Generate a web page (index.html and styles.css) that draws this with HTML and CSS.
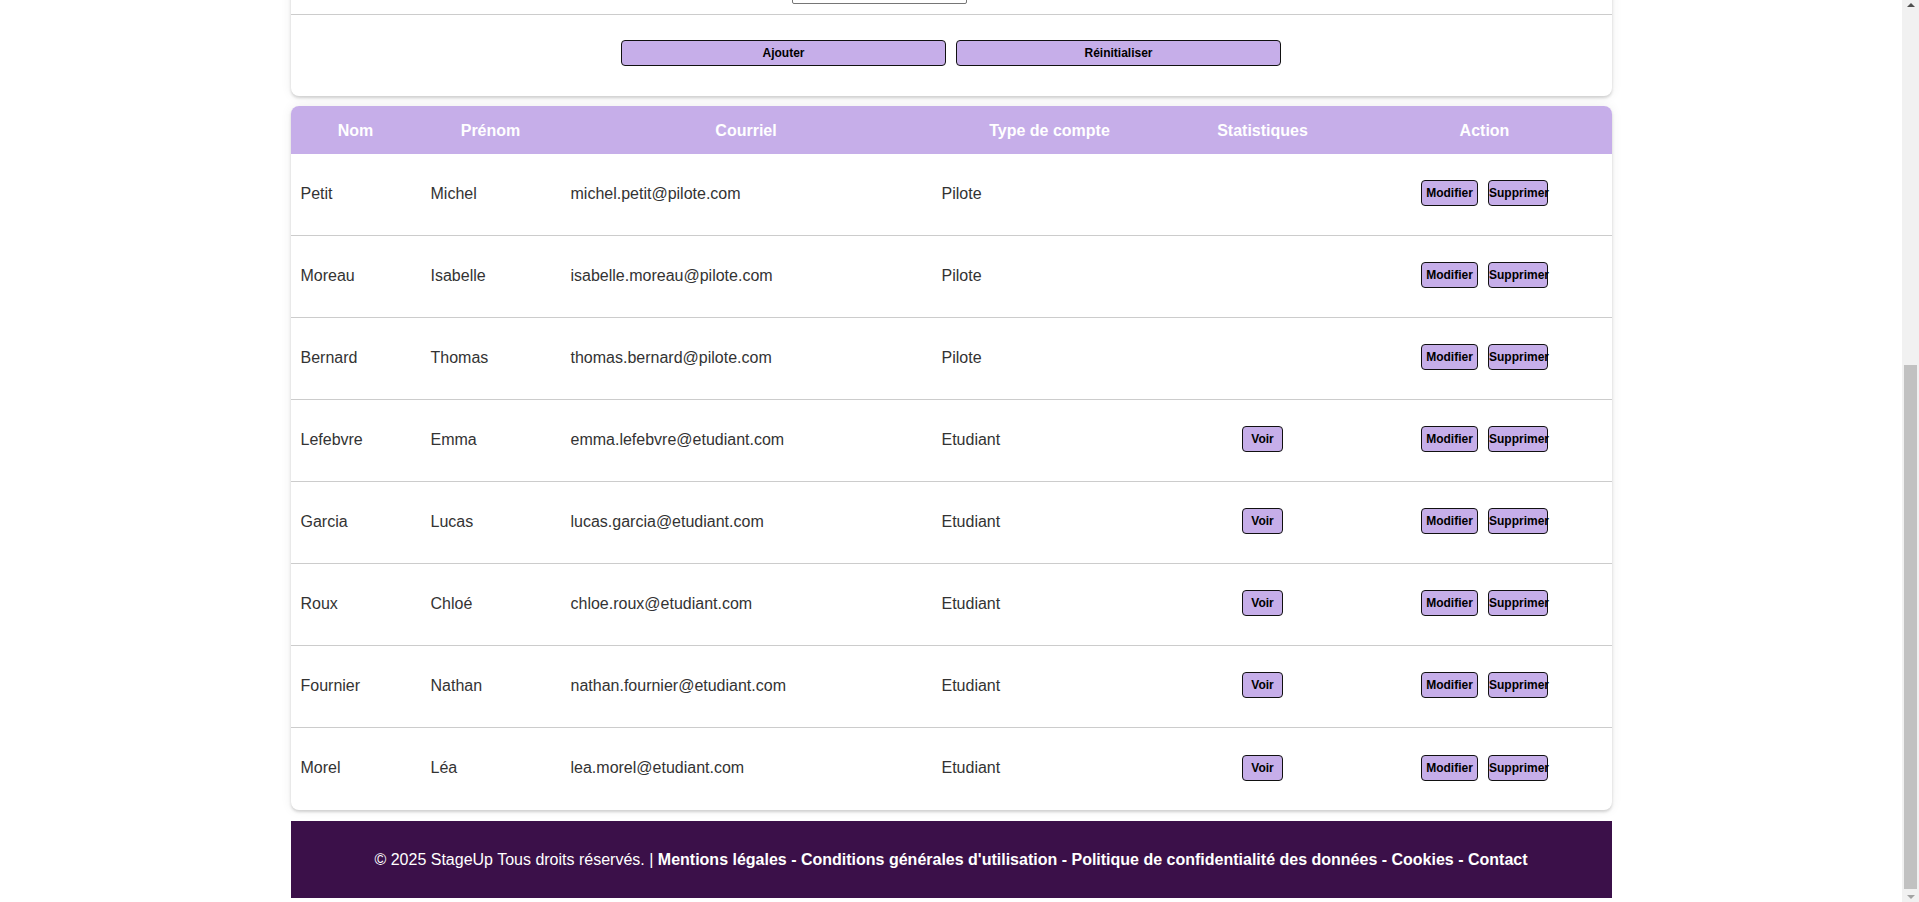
FILE: index.html
```html
<!DOCTYPE html>
<html lang="fr">
<head>
<meta charset="utf-8">
<title>StageUp - Gestion des comptes</title>
<link rel="stylesheet" href="styles.css">
</head>
<body>
<header class="site-header">
  <div class="header-inner">
    <span class="logo">StageUp</span>
    <nav class="main-nav">
      <a href="#">Accueil</a>
      <a href="#">Offres</a>
      <a href="#">Entreprises</a>
      <a href="#">Comptes</a>
      <a href="#">Déconnexion</a>
    </nav>
  </div>
</header>

<main class="page">
  <h1 class="page-title">Gestion des comptes</h1>

  <section class="card form-card">
    <h2 class="card-title">Ajouter un compte</h2>
    <form class="account-form">
      <div class="form-row"><label>Nom</label><input type="text"></div>
      <div class="form-row"><label>Prénom</label><input type="text"></div>
      <div class="form-row"><label>Courriel</label><input type="text"></div>
      <div class="form-row"><label>Mot de passe</label><input type="password"></div>
      <div class="form-row"><label>Confirmation du mot de passe</label><input type="password"></div>
      <div class="form-row"><label>Centre</label><input type="text"></div>
      <div class="form-row"><label>Promotion</label><input type="text"></div>
      <div class="form-row"><label>Type de compte</label><input type="text"></div>
      <div class="form-actions">
        <button type="button" class="btn btn-wide">Ajouter</button>
        <button type="reset" class="btn btn-wide">Réinitialiser</button>
      </div>
    </form>
  </section>

  <section class="card table-card">
    <table class="accounts">
      <colgroup>
        <col class="w-nom"><col class="w-prenom"><col class="w-mail"><col class="w-type"><col class="w-stat"><col class="w-action">
      </colgroup>
      <thead>
        <tr><th>Nom</th><th>Prénom</th><th>Courriel</th><th>Type de compte</th><th>Statistiques</th><th>Action</th></tr>
      </thead>
      <tbody>
        <tr><td>Petit</td><td>Michel</td><td>michel.petit@pilote.com</td><td>Pilote</td><td class="center"></td>
          <td class="center"><div class="actions"><button class="btn btn-mod">Modifier</button><button class="btn btn-del">Supprimer</button></div></td></tr>
        <tr><td>Moreau</td><td>Isabelle</td><td>isabelle.moreau@pilote.com</td><td>Pilote</td><td class="center"></td>
          <td class="center"><div class="actions"><button class="btn btn-mod">Modifier</button><button class="btn btn-del">Supprimer</button></div></td></tr>
        <tr><td>Bernard</td><td>Thomas</td><td>thomas.bernard@pilote.com</td><td>Pilote</td><td class="center"></td>
          <td class="center"><div class="actions"><button class="btn btn-mod">Modifier</button><button class="btn btn-del">Supprimer</button></div></td></tr>
        <tr><td>Lefebvre</td><td>Emma</td><td>emma.lefebvre@etudiant.com</td><td>Etudiant</td><td class="center"><button class="btn btn-voir">Voir</button></td>
          <td class="center"><div class="actions"><button class="btn btn-mod">Modifier</button><button class="btn btn-del">Supprimer</button></div></td></tr>
        <tr><td>Garcia</td><td>Lucas</td><td>lucas.garcia@etudiant.com</td><td>Etudiant</td><td class="center"><button class="btn btn-voir">Voir</button></td>
          <td class="center"><div class="actions"><button class="btn btn-mod">Modifier</button><button class="btn btn-del">Supprimer</button></div></td></tr>
        <tr><td>Roux</td><td>Chloé</td><td>chloe.roux@etudiant.com</td><td>Etudiant</td><td class="center"><button class="btn btn-voir">Voir</button></td>
          <td class="center"><div class="actions"><button class="btn btn-mod">Modifier</button><button class="btn btn-del">Supprimer</button></div></td></tr>
        <tr><td>Fournier</td><td>Nathan</td><td>nathan.fournier@etudiant.com</td><td>Etudiant</td><td class="center"><button class="btn btn-voir">Voir</button></td>
          <td class="center"><div class="actions"><button class="btn btn-mod">Modifier</button><button class="btn btn-del">Supprimer</button></div></td></tr>
        <tr><td>Morel</td><td>Léa</td><td>lea.morel@etudiant.com</td><td>Etudiant</td><td class="center"><button class="btn btn-voir">Voir</button></td>
          <td class="center"><div class="actions"><button class="btn btn-mod">Modifier</button><button class="btn btn-del">Supprimer</button></div></td></tr>
      </tbody>
    </table>
  </section>
</main>

<footer class="site-footer">
  © 2025 StageUp Tous droits réservés. | <span class="footer-links"><a href="#">Mentions légales</a> - <a href="#">Conditions générales d'utilisation</a> - <a href="#">Politique de confidentialité des données</a> - <a href="#">Cookies</a> - <a href="#">Contact</a></span>
</footer>

<div class="scrollbar" aria-hidden="true">
  <span class="sb-arrow sb-up"></span>
  <span class="sb-thumb"></span>
  <span class="sb-arrow sb-down"></span>
</div>
<script src="script.js"></script>
</body>
</html>
```

FILE: styles.css
```css
* { box-sizing: border-box; }
html, body { margin: 0; padding: 0; }
body {
  font-family: "Liberation Sans", Arial, sans-serif;
  font-size: 16px;
  color: #333;
  background: #fff;
  margin-right: 17px;
}

/* drawn classic scrollbar (overlay on the right edge) */
.scrollbar {
  position: fixed; top: 0; right: 0; bottom: 0; width: 17px;
  background: #f1f1f1;
}
.sb-thumb {
  position: absolute; left: 2px; right: 2px; top: 365px; bottom: 13px;
  background: #c1c1c1;
}
.sb-arrow {
  position: absolute; left: 5px; width: 0; height: 0;
  border-left: 4px solid transparent; border-right: 4px solid transparent;
}
.sb-up { top: 3px; border-bottom: 4px solid #505050; }
.sb-down { bottom: 3px; border-top: 4px solid #a3a3a3; }

.site-header { background: #3b1049; height: 120px; }
.header-inner {
  width: 1321px; margin: 0 auto; height: 100%;
  display: flex; align-items: center; justify-content: space-between;
  padding: 0 25px;
}
.logo { color: #fff; font-size: 28px; font-weight: bold; }
.main-nav { display: flex; gap: 25px; }
.main-nav a { color: #fff; text-decoration: none; font-weight: bold; }

.page { width: 1321px; margin: 0 auto; padding-top: 30px; }
.page-title { margin: 0 0 20px; font-size: 28px; line-height: 32px; color: #3b1049; text-align: center; }

.card {
  background: #fff;
  border-radius: 8px;
  box-shadow: 0 2px 3px rgba(0, 0, 0, 0.16), 0 0 12px rgba(0, 0, 0, 0.07);
}

.form-card { padding-top: 25px; margin-bottom: 10px; }
.card-title { margin: 0 25px 15px; font-size: 22px; line-height: 26px; }
.form-row {
  display: grid;
  grid-template-columns: 476px 175px;
  align-items: center;
  padding: 10px 25px;
  border-bottom: 1px solid #cccccc;
}
.form-row label { line-height: 18px; align-self: start; }
.form-row input {
  width: 175px; height: 22px;
  border: 1px solid #767676; border-radius: 2px;
  font: 13px "Liberation Sans", Arial, sans-serif;
  padding: 1px 2px;
}
.form-actions { display: flex; justify-content: center; gap: 10px; padding: 25px 0 30px; }

.btn {
  background: #c6aee9;
  border: 1px solid #111;
  border-radius: 4px;
  font: bold 12px/14px "Liberation Sans", Arial, sans-serif;
  color: #000;
  height: 26px;
  padding: 0;
  white-space: nowrap;
  cursor: pointer;
}
.btn-wide { width: 325px; }
.btn-voir { width: 41px; }
.btn-mod { width: 57px; }
.btn-del { width: 60px; text-align: left; padding-left: 0; }

.table-card { overflow: hidden; margin-bottom: 11px; }
.accounts { width: 100%; border-collapse: separate; border-spacing: 0; table-layout: fixed; }
.w-nom { width: 130px; }
.w-prenom { width: 140px; }
.w-mail { width: 371px; }
.w-type { width: 236px; }
.w-stat { width: 190px; }
.w-action { width: 254px; }
.accounts th {
  background: #c6aee9; color: #fff; font-weight: bold;
  height: 48px; padding: 0 10px; text-align: center; line-height: 19px;
}
.accounts td {
  height: 82px; padding: 0 10px 3px;
  border-bottom: 1px solid #cccccc;
  vertical-align: middle; line-height: 19px;
}
.accounts tbody tr:last-child td { border-bottom: none; }
.accounts td.center { text-align: center; }
.actions { display: flex; justify-content: center; gap: 10px; }

.site-footer {
  width: 1321px; margin: 0 auto 4px;
  background: #3b1049; color: #fff;
  text-align: center; padding: 29px 0; line-height: 19px;
}
.footer-links { font-weight: bold; }
.footer-links a { color: #fff; text-decoration: none; }
```

FILE: script.js
```js
window.scrollTo(0, document.documentElement.scrollHeight);
window.addEventListener('load', function () {
  window.scrollTo(0, document.documentElement.scrollHeight);
});
```
